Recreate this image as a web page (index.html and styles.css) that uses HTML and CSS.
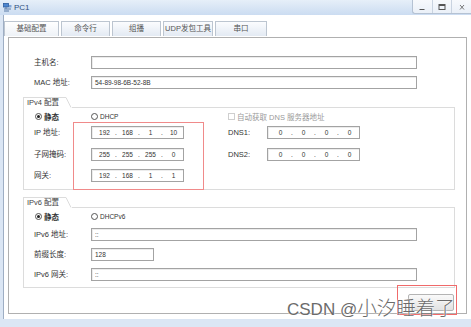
FILE: index.html
```html
<!DOCTYPE html>
<html>
<head>
<meta charset="utf-8">
<title>PC1</title>
<link rel="stylesheet" href="styles.css">
</head>
<body>
<div class="window">
  <div class="titlebar">
    <svg class="app-icon" width="9" height="9" viewBox="0 0 9 9">
      <rect x="0.5" y="0.5" width="5" height="3.5" fill="#4d86cf" stroke="#2d5e9e" stroke-width="0.8"/>
      <path d="M1 6 H8 M1 8 H6 M3 4 V6" stroke="#5a7aa6" stroke-width="1"/>
      <rect x="6" y="2" width="2.5" height="2.5" fill="#7fa6d8"/>
    </svg>
    <span class="title">PC1</span>
    <div class="controls">
      <span class="ctl"><svg width="8" height="8" viewBox="0 0 8 8"><path d="M1.5 6.5 H6.5" stroke="#555" stroke-width="1"/></svg></span>
      <span class="ctl"><svg width="8" height="8" viewBox="0 0 8 8"><rect x="1" y="1.5" width="6" height="5" fill="none" stroke="#555" stroke-width="1"/><path d="M1 2.5 H7" stroke="#555"/></svg></span>
      <span class="ctl"><svg width="8" height="8" viewBox="0 0 8 8"><path d="M2 2 L6 6.5 M6 2 L2 6.5" stroke="#666" stroke-width="0.9"/></svg></span>
    </div>
  </div>

  <div class="client">
    <div class="tabs">
      <div class="tab active t1">基础配置</div>
      <div class="tab t2">命令行</div>
      <div class="tab t3">组播</div>
      <div class="tab t4">UDP发包工具</div>
      <div class="tab t5">串口</div>
    </div>

    <div class="panel">
      <div class="row first">
        <span class="lbl">主机名:</span>
        <div class="field wide"></div>
      </div>
      <div class="row next">
        <span class="lbl">MAC 地址:</span>
        <div class="field wide"><span class="val">54-89-98-6B-52-8B</span></div>
      </div>

      <div class="group g4">
        <div class="group-head">
          <div class="legend">IPv4 配置</div>
          <svg class="slant" width="6" height="11" viewBox="0 0 6 11"><path d="M0 0.5 L5 10.5" stroke="#dcdcdc" stroke-width="1"/></svg>
          <div class="head-fill"></div>
        </div>
        <div class="group-body">
          <div class="radio-row">
            <span class="opt opt-static"><span class="radio checked"></span><b>静态</b></span>
            <span class="opt opt-dhcp"><span class="radio"></span>DHCP</span>
            <span class="opt opt-check"><span class="check"></span>自动获取 DNS 服务器地址</span>
          </div>
          <div class="row ip-row r-ip">
            <span class="lbl">IP 地址:</span>
            <div class="field ip"><span class="oct">192</span><span class="dot">.</span><span class="oct">168</span><span class="dot">.</span><span class="oct">1</span><span class="dot">.</span><span class="oct">10</span></div>
            <span class="lbl lbl-dns">DNS1:</span>
            <div class="field ip"><span class="oct">0</span><span class="dot">.</span><span class="oct">0</span><span class="dot">.</span><span class="oct">0</span><span class="dot">.</span><span class="oct">0</span></div>
          </div>
          <div class="row ip-row r-mask">
            <span class="lbl">子网掩码:</span>
            <div class="field ip"><span class="oct">255</span><span class="dot">.</span><span class="oct">255</span><span class="dot">.</span><span class="oct">255</span><span class="dot">.</span><span class="oct">0</span></div>
            <span class="lbl lbl-dns">DNS2:</span>
            <div class="field ip"><span class="oct">0</span><span class="dot">.</span><span class="oct">0</span><span class="dot">.</span><span class="oct">0</span><span class="dot">.</span><span class="oct">0</span></div>
          </div>
          <div class="row ip-row r-gw">
            <span class="lbl">网关:</span>
            <div class="field ip"><span class="oct">192</span><span class="dot">.</span><span class="oct">168</span><span class="dot">.</span><span class="oct">1</span><span class="dot">.</span><span class="oct">1</span></div>
          </div>
          <div class="mark mark-ip"></div>
        </div>
      </div>

      <div class="group g6">
        <div class="group-head">
          <div class="legend">IPv6 配置</div>
          <svg class="slant" width="6" height="11" viewBox="0 0 6 11"><path d="M0 0.5 L5 10.5" stroke="#dcdcdc" stroke-width="1"/></svg>
          <div class="head-fill"></div>
        </div>
        <div class="group-body">
          <div class="radio-row">
            <span class="opt opt-static"><span class="radio checked"></span><b>静态</b></span>
            <span class="opt opt-dhcp"><span class="radio"></span>DHCPv6</span>
          </div>
          <div class="row v6">
            <span class="lbl">IPv6 地址:</span>
            <div class="field wide"><span class="val">::</span></div>
          </div>
          <div class="row v6">
            <span class="lbl">前缀长度:</span>
            <div class="field short"><span class="val">128</span></div>
          </div>
          <div class="row v6">
            <span class="lbl">IPv6 网关:</span>
            <div class="field wide"><span class="val">::</span></div>
          </div>
        </div>
      </div>

      <div class="actions">
        <button class="btn" type="button"></button>
      </div>
    </div>
  </div>

  <div class="mark mark-btn"></div>
  <div class="watermark"><span class="wm-latin">CSDN @</span><span class="wm-cjk">小汐睡着了</span></div>
</div>
</body>
</html>
```

FILE: styles.css
```css
* { box-sizing: border-box; }

html, body {
  margin: 0;
  padding: 0;
}

body {
  width: 471px;
  height: 327px;
  overflow: hidden;
  background: #dbe6f4;
  font-family: "Liberation Sans", "Noto Sans CJK SC", sans-serif;
  color: #333;
}

.window {
  position: relative;
  width: 471px;
  height: 327px;
}

/* ---------- title bar ---------- */
.titlebar {
  height: 15px;
  display: flex;
  align-items: center;
  background: linear-gradient(#e6eff9, #cbdcf1);
}

.app-icon {
  margin-left: 3px;
  flex: none;
}

.title {
  margin-left: 2px;
  font-size: 8px;
  line-height: 10px;
  color: #30507e;
}

.controls {
  margin-left: auto;
  align-self: flex-start;
  height: 14px;
  width: 59px;
  display: flex;
  background: linear-gradient(#f7f9fc, #eaf0f8);
  border-left: 1px solid #b5c2d3;
  border-bottom: 1px solid #b5c2d3;
  border-bottom-left-radius: 3px;
}

.ctl {
  flex: 1;
  display: flex;
  align-items: center;
  justify-content: center;
  border-left: 1px solid #c9d3e0;
}

.ctl:first-child { border-left: none; }

/* ---------- client area ---------- */
.client {
  margin-left: 3px;
  width: 468px;
  height: 304px;
  background: #fff;
  border-left: 1px solid #9eaec4;
  padding-top: 6px;
}

.tabs {
  display: flex;
  gap: 2px;
  height: 15px;
}

.tab {
  height: 15px;
  border: 1px solid #bcc5d0;
  border-bottom: none;
  background: linear-gradient(#fbfcfe, #e3eaf3);
  font-size: 7.5px;
  line-height: 14px;
  text-align: center;
  color: #555;
}

.tab.active { background: linear-gradient(#ffffff, #eef2f7); }

.t1 { width: 55px; }
.t2 { width: 49px; }
.t3 { width: 49px; }
.t4 { width: 50px; }
.t5 { width: 52px; }

.panel {
  margin-top: 1px;
  margin-left: 4px;
  width: 459px;
  height: 277px;
  border: 1px solid #b0b0b0;
  padding-top: 18px;
  display: flex;
  flex-direction: column;
}

/* ---------- rows ---------- */
.row {
  display: flex;
  align-items: center;
  height: 13px;
  flex: none;
}

.panel > .row { padding-left: 25px; }
.row.next { margin-top: 7px; }

.lbl {
  width: 57px;
  flex: none;
  font-size: 7.5px;
  line-height: 10px;
  color: #333;
  white-space: nowrap;
}

.field {
  height: 13px;
  border: 1px solid #a3a3a3;
  background: #fff;
  box-shadow: inset 1px 1px 0 #ececec;
  flex: none;
  display: flex;
  align-items: center;
  font-size: 6.5px;
  color: #333;
}

.field.wide { width: 326px; }
.field.short { width: 63px; }

.val { padding-left: 3px; }

.field.ip {
  width: 93px;
  padding-left: 4px;
}

.oct {
  width: 17px;
  text-align: center;
}

.dot {
  width: 6px;
  text-align: center;
}

.lbl-dns {
  width: 39px;
  margin-left: 44px;
}

/* ---------- group boxes ---------- */
.group {
  margin-left: 14px;
  width: 432px;
  flex: none;
}

.g4 { margin-top: 8px; }
.g6 { margin-top: 7px; }

.group-head {
  display: flex;
  height: 11px;
}

.legend {
  width: 43px;
  height: 11px;
  border-left: 1px solid #dcdcdc;
  border-top: 1px solid #dcdcdc;
  font-size: 7.5px;
  line-height: 10px;
  padding-left: 3px;
  color: #444;
  white-space: nowrap;
}

.slant { flex: none; display: block; }

.head-fill {
  flex: 1;
  border-bottom: 1px solid #dcdcdc;
}

.group-body {
  position: relative;
  border: 1px solid #dcdcdc;
  border-top: none;
  padding: 3px 0 7px 10px;
}

.g6 .group-body { padding-bottom: 6px; }

.radio-row {
  display: flex;
  align-items: center;
  height: 10px;
  font-size: 7.5px;
  color: #333;
}

.opt {
  display: flex;
  align-items: center;
  white-space: nowrap;
}

.opt b { font-weight: bold; }

.opt-static { width: 57px; padding-left: 1px; }
.opt-dhcp { width: 137px; font-size: 6.5px; }
.opt-check { color: #9a9a9a; font-size: 7.5px; }

.radio {
  width: 7px;
  height: 7px;
  border: 1px solid #555;
  border-radius: 50%;
  margin-right: 2px;
  display: flex;
  align-items: center;
  justify-content: center;
  background: #fff;
}

.radio.checked::after {
  content: "";
  width: 3px;
  height: 3px;
  border-radius: 50%;
  background: #222;
}

.check {
  width: 7px;
  height: 7px;
  border: 1px solid #cfcfcf;
  margin-right: 2px;
  background: #fff;
}

.r-ip { margin-top: 5px; }
.r-mask { margin-top: 9px; }
.r-gw { margin-top: 8px; }
.v6 { margin-top: 7px; }

/* ---------- buttons / annotations ---------- */
.actions {
  margin-top: 6px;
  display: flex;
  justify-content: flex-end;
  padding-right: 12px;
}

.btn {
  width: 46px;
  height: 17px;
  border: 1px solid #b4b4b4;
  border-radius: 2px;
  background: linear-gradient(#fafafa, #e2e2e2);
  padding: 0;
}

.mark {
  position: absolute;
  border: 1px solid #f08a8a;
  pointer-events: none;
}

.mark-ip {
  left: 49px;
  top: 14px;
  width: 131px;
  height: 68px;
}

.mark-btn {
  left: 397px;
  top: 285px;
  width: 60px;
  height: 30px;
  border-color: #f06a6a;
}

.watermark {
  position: absolute;
  left: 287px;
  top: 296px;
  white-space: nowrap;
  color: #6b6b6b;
  line-height: 22px;
  text-shadow: 0 0 1px #fff, 0 0 2px #fff;
}

.wm-latin {
  font-family: "Liberation Sans", sans-serif;
  font-size: 17px;
}

.wm-cjk {
  font-family: "Noto Sans CJK SC", sans-serif;
  font-size: 19.5px;
  font-weight: 300;
}
```
